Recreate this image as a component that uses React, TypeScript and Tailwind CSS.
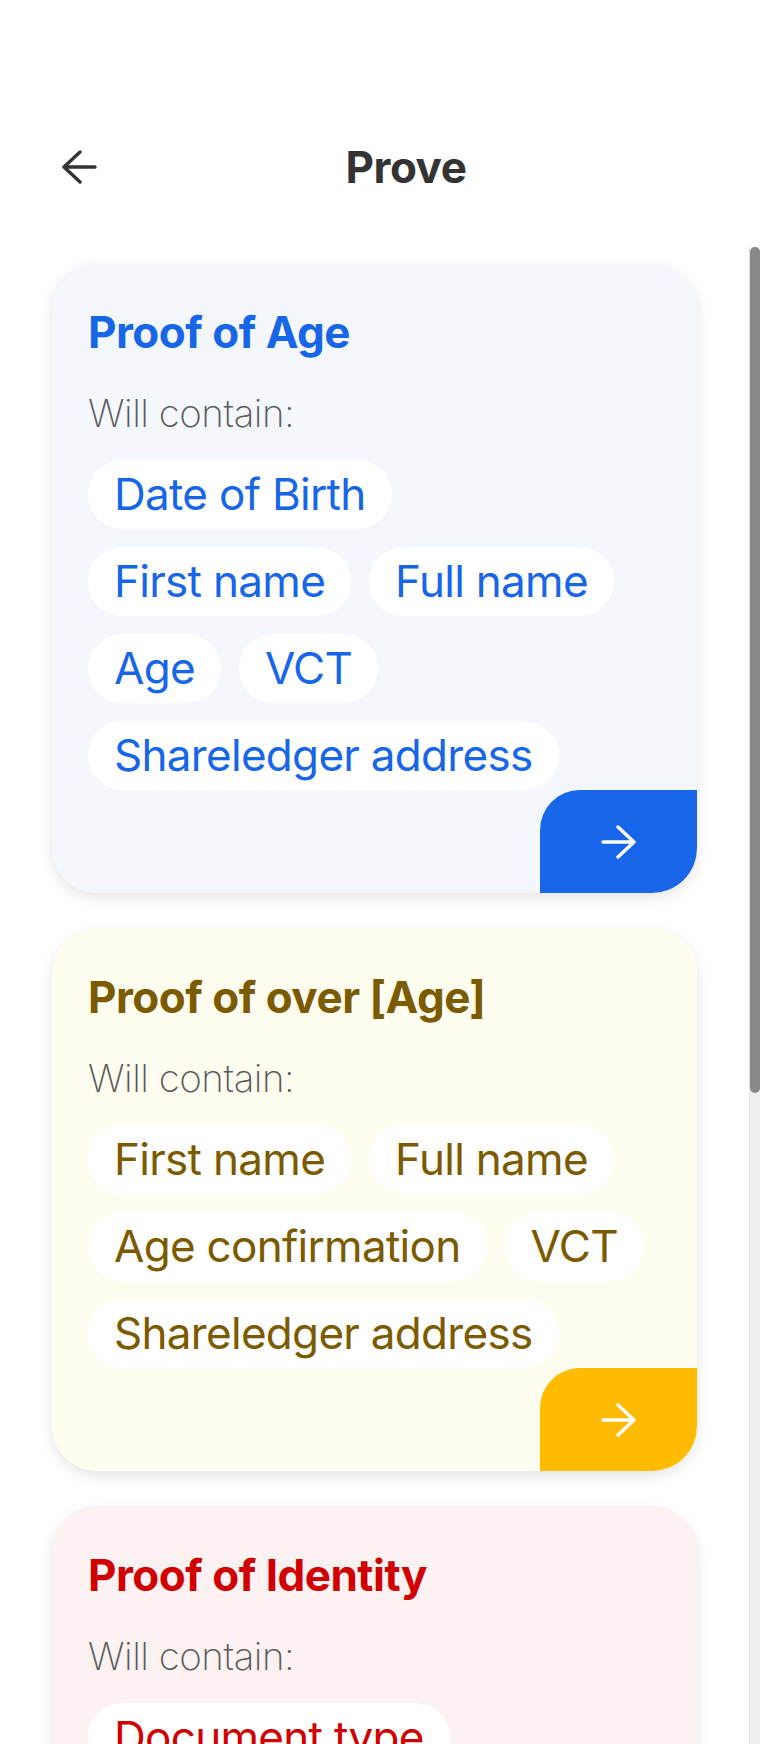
import { ReactNode } from 'react';

type Tone = 'blue' | 'yellow' | 'red';

interface ProofCard {
  id: string;
  title: string;
  tone: Tone;
  fields: string[];
}

const cards: ProofCard[] = [
  {
    id: 'age',
    title: 'Proof of Age',
    tone: 'blue',
    fields: ['Date of Birth', 'First name', 'Full name', 'Age', 'VCT', 'Shareledger address'],
  },
  {
    id: 'over-age',
    title: 'Proof of over [Age]',
    tone: 'yellow',
    fields: ['First name', 'Full name', 'Age confirmation', 'VCT', 'Shareledger address'],
  },
  {
    id: 'identity',
    title: 'Proof of Identity',
    tone: 'red',
    fields: ['Document type', 'Document number', 'First name', 'Full name', 'VCT', 'Shareledger address'],
  },
];

const toneClasses: Record<Tone, { card: string; text: string; button: string }> = {
  blue: { card: 'bg-[#f4f7fc]', text: 'text-[#1766e8]', button: 'bg-[#1766ea]' },
  yellow: { card: 'bg-[#fffcf0]', text: 'text-[#7b5a00]', button: 'bg-[#ffbb00]' },
  red: { card: 'bg-[#fdf2f2]', text: 'text-[#d00000]', button: 'bg-[#d00000]' },
};

function Arrow({ direction, className }: { direction: 'left' | 'right'; className?: string }) {
  // hand drawn arrow, same stroke weight as the reference
  const d = direction === 'left' ? 'M34 17H3 M19 2 L3 17 L19 32' : 'M2 17H33 M17 2 L33 17 L17 32';
  return (
    <svg width="36" height="34" viewBox="0 0 36 34" fill="none" className={className}>
      <path d={d} stroke="currentColor" strokeWidth="3.4" strokeLinecap="round" strokeLinejoin="round" />
    </svg>
  );
}

function Chip({ children, textClass }: { children: ReactNode; textClass: string }) {
  return (
    <div
      className={`h-[69px] px-[26px] rounded-full bg-white flex items-center text-[44px] leading-[53px] tracking-[-0.7px] whitespace-nowrap ${textClass}`}
    >
      {children}
    </div>
  );
}

function Card({ card }: { card: ProofCard }) {
  const tone = toneClasses[card.tone];
  return (
    <div className={`rounded-[45px] overflow-hidden shadow-[0_5px_14px_rgba(0,0,0,0.10)] ${tone.card}`}>
      <div className="px-[36px] pt-[43px]">
        <h2 className={`text-[44px] leading-[53px] font-bold tracking-[-0.5px] ${tone.text}`}>{card.title}</h2>
        <p className="mt-[31px] text-[38.5px] leading-[46px] font-extralight tracking-[-0.5px] text-[#5a5a5a]">
          Will contain:
        </p>
        <div className="mt-[24px] flex flex-wrap gap-x-[18px] gap-y-[18px]">
          {card.fields.map((field) => (
            <Chip key={field} textClass={tone.text}>
              {field}
            </Chip>
          ))}
        </div>
      </div>
      <div className="flex justify-end">
        <button className={`w-[157px] h-[103px] rounded-tl-[40px] flex items-center justify-center text-white ${tone.button}`}>
          <Arrow direction="right" />
        </button>
      </div>
    </div>
  );
}

export default function App() {
  return (
    <div className="w-[760px] h-[1744px] overflow-hidden bg-white relative font-['Inter',sans-serif]">
      {/* Header */}
      <header className="h-[247px] pt-[137px]">
        <div className="flex items-center h-[60px]">
          <button className="ml-[61px] w-[36px] h-[34px] flex items-center justify-center text-[#333333]">
            <Arrow direction="left" />
          </button>
          <h1 className="flex-1 pr-[45px] text-center text-[44px] leading-[60px] font-bold text-[#333333] tracking-[-0.5px]">
            Prove
          </h1>
        </div>
      </header>

      {/* List + scrollbar */}
      <div className="flex">
        <div className="w-[749px] px-[52px] pt-[16px] pb-[40px] flex flex-col gap-[35px]">
          {cards.map((card) => (
            <Card key={card.id} card={card} />
          ))}
        </div>
        <div className="w-[11px] bg-[#efefef] border-l border-[#e4e4e4] h-[1497px]">
          <div className="h-[846px] rounded-full bg-[#888888]" />
        </div>
      </div>
    </div>
  );
}
